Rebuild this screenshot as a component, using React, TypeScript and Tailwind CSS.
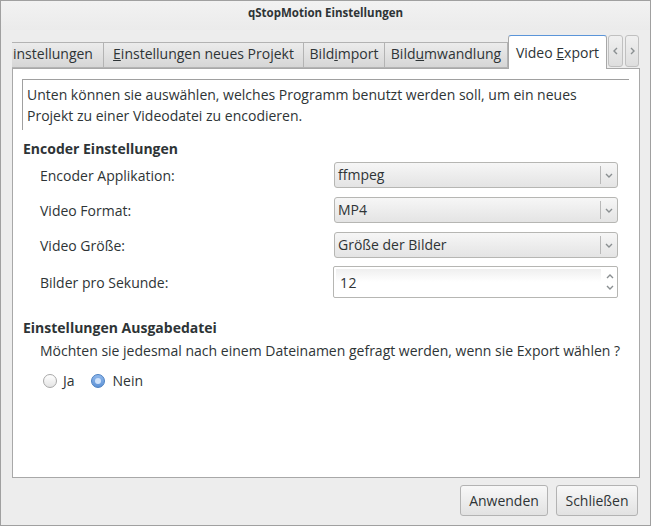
import React from "react";

const font = { fontFamily: "'Open Sans', sans-serif" };

function Chevron({ dir }: { dir: "down" | "up" | "left" | "right" }) {
  const d =
    dir === "down"
      ? "M1 1 L4 4 L7 1"
      : dir === "up"
      ? "M1 4 L4 1 L7 4"
      : dir === "left"
      ? "M4 1 L1 4 L4 7"
      : "M1 1 L4 4 L1 7";
  const w = dir === "down" || dir === "up" ? 8 : 5;
  const h = dir === "down" || dir === "up" ? 5 : 8;
  return (
    <svg width={w} height={h} viewBox={`0 0 ${w} ${h}`} className="block">
      <path d={d} fill="none" stroke="#8a8f91" strokeWidth="1.4" />
    </svg>
  );
}

function Combo({ value }: { value: string }) {
  return (
    <div className="w-[284px] h-[26px] rounded-[3px] border border-[#b6b6b3] bg-gradient-to-b from-[#f6f6f6] to-[#e4e4e4] flex items-center">
      <span className="flex-1 pl-[3px] text-[14px] text-[#2e3436] leading-none">{value}</span>
      <div className="w-px h-[18px] bg-[#b8b8b8]" />
      <div className="w-[16px] flex justify-center">
        <Chevron dir="down" />
      </div>
    </div>
  );
}

function Tab({ w, children, active }: { w: number; children: React.ReactNode; active?: boolean }) {
  if (active)
    return (
      <div
        style={{ width: w }}
        className="relative z-10 -mb-px h-[34px] bg-white border border-[#a8a8a8] border-b-0 border-t-[#5b95d9] rounded-t-[3px] flex items-start pt-[6px] justify-center text-[14px] text-[#2e3436]"
      >
        {children}
      </div>
    );
  return (
    <div
      style={{ width: w }}
      className="h-[26px] pb-[3px] border border-[#b3b3b3] border-l-0 bg-gradient-to-b from-[#ececec] to-[#d6d6d6] flex items-center justify-center text-[14px] text-[#2e3436]"
    >
      {children}
    </div>
  );
}

export default function App() {
  return (
    <div style={font} className="w-[651px] h-[526px] border border-[#a0a0a0] bg-[#ededed] flex flex-col text-[#2e3436]">
      <div className="h-[29px] flex items-center justify-center pb-[6px] text-[11.5px] font-bold text-[#2e3436] bg-gradient-to-b from-[#f2f2f2] to-[#ebebeb]">
        qStopMotion Einstellungen
      </div>
      <div className="pl-[11px] pr-[10px] flex flex-col">
        {/* tab row */}
        <div className="h-[38px] flex items-end">
          <div className="h-[26px] pb-[3px] w-[92px] border border-[#b3b3b3] border-l-0 bg-gradient-to-b from-[#ececec] to-[#d6d6d6] flex items-center pl-[1px] text-[14px] overflow-hidden whitespace-nowrap">
            instellungen
          </div>
          <Tab w={200}>
            <span><u>E</u>instellungen neues Projekt</span>
          </Tab>
          <Tab w={81}>
            <span>Bild<u>i</u>mport</span>
          </Tab>
          <Tab w={123}>
            <span>Bild<u>u</u>mwandlung</span>
          </Tab>
          <Tab w={99} active>
            <span>Video <u>E</u>xport</span>
          </Tab>
          <div className="ml-[1px] mb-[1px] h-[32px] w-[15px] rounded-[3px] border border-[#c0c0c0] bg-gradient-to-b from-[#f0f0f0] to-[#dedede] flex items-center justify-center">
            <Chevron dir="left" />
          </div>
          <div className="ml-[2px] mb-[1px] h-[32px] w-[14px] rounded-[3px] border border-[#c0c0c0] bg-gradient-to-b from-[#f0f0f0] to-[#dedede] flex items-center justify-center">
            <Chevron dir="right" />
          </div>
        </div>
        {/* panel */}
        <div className="h-[410px] border border-[#a8a8a8] bg-white flex flex-col text-[14px]">
          <div className="mt-[10px] ml-[9px] mr-[10px] border-t border-l border-[#a0a0a0] pl-[4px] pt-[4px] pb-[4px] leading-[21px]">
            Unten können sie auswählen, welches Programm benutzt werden soll, um ein neues
            <br />
            Projekt zu einer Videodatei zu encodieren.
          </div>
          <div className="mt-[9px] ml-[10px] font-bold leading-[20px]">Encoder Einstellungen</div>
          <div className="mt-[3px] ml-[27px] flex flex-col gap-[9px]">
            <div className="flex items-center h-[26px]">
              <span className="w-[294px]">Encoder Applikation:</span>
              <Combo value="ffmpeg" />
            </div>
            <div className="flex items-center h-[26px]">
              <span className="w-[294px]">Video Format:</span>
              <Combo value="MP4" />
            </div>
            <div className="flex items-center h-[26px]">
              <span className="w-[294px]">Video Größe:</span>
              <Combo value="Größe der Bilder" />
            </div>
            <div className="flex items-center h-[32px] -mt-[1px]">
              <span className="w-[293px]">Bilder pro Sekunde:</span>
              <div className="w-[285px] h-[32px] border border-[#b6b6b3] rounded-[2px] bg-white flex">
                <div className="flex-1 flex items-center pl-[4px] m-[2px] mr-[1px] bg-gradient-to-b from-[#efefef] via-white to-white">
                  <span className="tracking-[0.5px]">12</span>
                </div>
                <div className="w-[15px] flex flex-col items-center justify-center gap-[6px]">
                  <Chevron dir="up" />
                  <Chevron dir="down" />
                </div>
              </div>
            </div>
          </div>
          <div className="mt-[20px] ml-[10px] font-bold leading-[20px]">Einstellungen Ausgabedatei</div>
          <div className="mt-[3px] ml-[27px] leading-[20px]">
            Möchten sie jedesmal nach einem Dateinamen gefragt werden, wenn sie Export wählen ?
          </div>
          <div className="mt-[10px] ml-[30px] flex items-center leading-[20px]">
            <div className="w-[14px] h-[14px] rounded-full border border-[#a8a8a8] bg-gradient-to-b from-white to-[#e4e4e4]" />
            <span className="ml-[6px]">Ja</span>
            <div className="ml-[16px] w-[14px] h-[14px] rounded-full border border-[#4a7fc1] bg-gradient-to-b from-[#8fb8ec] to-[#5f93d6] flex items-center justify-center">
              <div className="w-[6px] h-[6px] rounded-full bg-[#cfe2fa]" />
            </div>
            <span className="ml-[8px]">Nein</span>
          </div>
        </div>
      </div>
      <div className="mt-[7px] pr-[12px] flex justify-end gap-[8px]">
        <div className="w-[88px] h-[31px] rounded-[3px] border border-[#b3b3b3] bg-gradient-to-b from-[#f8f8f8] to-[#e2e2e2] flex items-center justify-center text-[14px]">
          Anwenden
        </div>
        <div className="w-[82px] h-[31px] rounded-[3px] border border-[#b3b3b3] bg-gradient-to-b from-[#f8f8f8] to-[#e2e2e2] flex items-center justify-center text-[14px]">
          Schließen
        </div>
      </div>
    </div>
  );
}
